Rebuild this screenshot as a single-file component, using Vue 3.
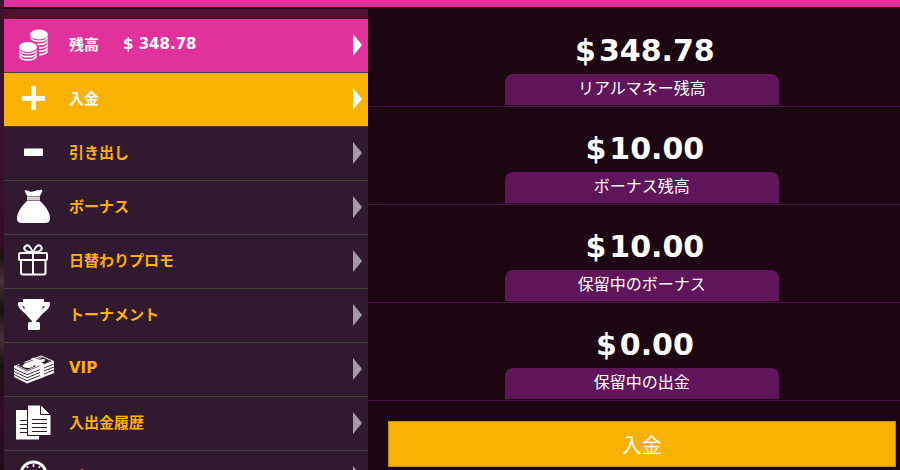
<script setup>
const items = [
  { id: 'balance', label: '残高', amount: '$ 348.78', tone: 'pink' },
  { id: 'deposit', label: '入金', tone: 'gold' },
  { id: 'withdraw', label: '引き出し' },
  { id: 'bonus', label: 'ボーナス' },
  { id: 'daily', label: '日替わりプロモ' },
  { id: 'tournament', label: 'トーナメント' },
  { id: 'vip', label: 'VIP' },
  { id: 'history', label: '入出金履歴' },
  { id: 'games', label: 'ゲーム' },
]

const balances = [
  { label: 'リアルマネー残高', value: '348.78' },
  { label: 'ボーナス残高', value: '10.00' },
  { label: '保留中のボーナス', value: '10.00' },
  { label: '保留中の出金', value: '0.00' },
]
</script>

<template>
  <div class="page">
    <div class="topbar"></div>
    <div class="layout">
      <nav class="menu" aria-label="アカウント">
        <a v-for="item in items" :key="item.id" href="#" class="row" :class="item.tone">
          <svg class="icon" viewBox="0 0 44 44" aria-hidden="true">
            <g v-if="item.id === 'balance'" fill="#fff">
              <ellipse cx="28" cy="12.500" rx="9" ry="5" />
              <g fill="none" stroke="#fff" stroke-width="1.700">
                <path d="M19.800 15.500c2 5 14.400 5 16.400 0v1.500M26 22.300c4 .5 9-.5 10.200-3.300M28 25.800c3 .3 7.500-.8 8.200-3.300M28 29.200c3 .3 7.500-.8 8.200-3.300M28 32.500c3 .3 7.500-.8 8.200-3.300" />
                <path d="M8.800 28c2 4.500 14.400 4.500 16.400 0M8.800 31.300c2 4.500 14.400 4.500 16.400 0M8.800 34.500c2 4.500 14.400 4.500 16.400 0" />
                <path d="M8.800 27v8M25.200 27v8M36.200 15v15" stroke-width="1" opacity=".7" />
              </g>
              <ellipse cx="17" cy="25" rx="10" ry="6" fill="#e0319d" />
              <ellipse cx="17" cy="25" rx="9" ry="5" />
            </g>
            <path v-else-if="item.id === 'deposit'" d="M21 10h3a1 1 0 0 1 1 1v9h8a1 1 0 0 1 1 1v3a1 1 0 0 1-1 1h-8v8a1 1 0 0 1-1 1h-3a1 1 0 0 1-1-1v-8h-8a1 1 0 0 1-1-1v-3a1 1 0 0 1 1-1h8v-9a1 1 0 0 1 1-1z" fill="#fff" />
            <rect v-else-if="item.id === 'withdraw'" x="13" y="18.500" width="19" height="7.500" rx="1" fill="#fff" />
            <g v-else-if="item.id === 'bonus'" fill="#fff">
              <path d="M13.500 7q1-1.500 3.500-.3c2.500 1.200 3 1.500 5.500.6s4-1.300 6-1c1.500-.8 2.500-.5 3 1L28.500 12.500H16.500z" />
              <path d="M16 13h13v3.500H16z" fill="#d5cfd5" />
              <path d="M16 17h13c5 4.500 10 11 10 17.500q0 4.500-5 4.500H11q-5 0-5-4.500C6 28 11 21.500 16 17z" />
            </g>
            <g v-else-if="item.id === 'daily'" fill="none" stroke="#fff" stroke-width="2" stroke-linejoin="round">
              <rect x="8" y="15" width="28" height="7" rx="1" />
              <path d="M10 22v12.500q0 2 2 2h20.500q2 0 2-2V22M22 15v21" stroke-width="2" />
              <path d="M21 14c-8 0-9-4-6.500-6s5.500 1 7 6zM23 14c8 0 9-4 6.500-6s-5.500 1-7 6z" />
            </g>
            <g v-else-if="item.id === 'tournament'" fill="#fff">
              <path d="M12 7h21v3h4.500q2 0 1.500 3c-2 6-7 7-11 13l-3 3v1h2.500q1.500 0 1.500 1.500v5q0 1.500-1.500 1.500h-9Q17 38 17 36.500v-5q0-1.500 1.500-1.500H21v-1l-3-3C14 20 9 19 7 13q-.5-3 1.500-3H12z" />
              <path d="M11 14l2.500.5v3zM34 14l-2.500.5v3z" fill="#311a30" />
            </g>
            <g v-else-if="item.id === 'vip'">
              <path d="M3 20L30 9.500l13 5.500v12L16 37.500 3 31z" fill="#fff" />
              <path d="M3 22.500l13 6.200L43 18M3 25.500l13 6.200L43 21M3 28.500l13 6.200L43 24" fill="none" stroke="#311a30" stroke-width=".9" />
              <path d="M6 20l24-9 10 4-24 10z" fill="none" stroke="#311a30" stroke-width=".7" />
              <path d="M8 20q0-3 5-4 2 1-1 3t5 3q5 0 6-3l2 1-9 4zM26 13.500l6-2 7 3.500-6 3-3-2q4 0 4-2t-4-.5z" fill="#311a30" />
              <path d="M20 12.500l3-1 9 5.500 1 2v12l-4 1.500V20z" fill="#fff" />
            </g>
            <g v-else-if="item.id === 'history'">
              <path d="M5 10h13v25h10v4.500H5z" fill="#fff" />
              <path d="M9 20.500h9M9 24.500h9M9 28.500h9M9 32.500h9" stroke="#311a30" />
              <path d="M16.500 5h13.500l10 10v20.500H16.500z" fill="#fff" stroke="#311a30" />
              <path d="M29.500 5v9.500H40" fill="none" stroke="#311a30" />
              <path d="M21 19.500h15M21 23.500h15M21 27.500h15M21 31.500h15" stroke="#311a30" />
            </g>
            <g v-else fill="none" stroke="#fff">
              <circle cx="22.500" cy="20.500" r="12.500" stroke-width="3" />
              <path d="M22.500 10v3M16 12l1 2M29 12l-1 2M13 18l2 1M32 18l-2 1" stroke-width="1.500" />
            </g>
          </svg>
          <span class="label">{{ item.label }}</span>
          <span v-if="item.amount" class="amount">{{ item.amount }}</span>
          <svg class="arrow" viewBox="0 0 10 22" aria-hidden="true"><path d="M1 0l9 11-9 11z" /></svg>
        </a>
      </nav>
      <main class="panel">
        <section v-for="b in balances" :key="b.label" class="balance">
          <div class="value"><span>$</span><span>{{ b.value }}</span></div>
          <div class="tag">{{ b.label }}</div>
        </section>
        <button type="button" class="deposit">入金</button>
      </main>
    </div>
  </div>
</template>

<style>
body {
  background: #1b0611;
}
</style>

<style scoped>
.page {
  height: 100vh;
  overflow: hidden;
  padding-left: 4px;
  box-sizing: border-box;
  display: flex;
  flex-direction: column;
  background: linear-gradient(#3b1230 0, #35102b 40%, #350c28 52%, #17110f 54%, #493038 60%, #17110f 66%, #493038 72%, #17110f 78%, #350c28 88%, #1d0b18 100%);
  font-family: "Noto Sans", "Noto Sans CJK JP", sans-serif;
}
.topbar {
  flex: none;
  height: 7px;
  background: #e0319d;
  border-bottom: 2px solid #12030b;
}
.layout {
  flex: 1;
  min-height: 0;
  display: grid;
  grid-template-columns: 41fr 60fr;
}
.menu {
  padding-top: 10px;
  background: #501130;
  font-family: "DejaVu Sans", "Noto Sans CJK JP", sans-serif;
}
.row {
  display: flex;
  align-items: center;
  box-sizing: border-box;
  height: 54px;
  padding: 0 6px 4px 7px;
  background: #311a30;
  border-bottom: 1px solid #414039;
  color: #ffb000;
  font-size: 15px;
  font-weight: 700;
  text-decoration: none;
}
.pink {
  background: #e0319d;
  color: #fff;
}
.gold {
  background: #f9b104;
  color: #fff;
}
.icon {
  flex: none;
  width: 44px;
  height: 44px;
}
.label {
  margin-left: 14px;
}
.amount {
  margin-left: 24px;
}
.arrow {
  width: 10px;
  height: 22px;
  margin-top: 3px;
  margin-left: auto;
  fill: #a49ca4;
}
.pink .arrow,
.gold .arrow {
  fill: #fff;
}
.panel {
  background: #1b0611;
}
.balance {
  display: flex;
  flex-direction: column;
  align-items: center;
  box-sizing: border-box;
  height: 98px;
  padding: 18px 0 1px 16px;
  border-bottom: 1px solid #4b104d;
}
.value {
  display: flex;
  gap: 3px;
  height: 47px;
  line-height: 47px;
  padding-left: 6px;
  color: #fff;
  font-family: "DejaVu Sans", sans-serif;
  font-size: 30px;
  font-weight: 700;
}
.tag {
  width: 53%;
  height: 31px;
  line-height: 28px;
  border-radius: 8px 8px 0 0;
  background: #5f1559;
  color: #fff;
  font-size: 16px;
  text-align: center;
}
.deposit {
  display: block;
  width: calc(100% - 24px);
  height: 46px;
  margin: 20px 4px 0 20px;
  padding: 0;
  border: 1px solid #c48c0c;
  background: #f9b104;
  color: #fff;
  font-family: "Noto Sans CJK JP", sans-serif;
  font-size: 20px;
}
</style>
